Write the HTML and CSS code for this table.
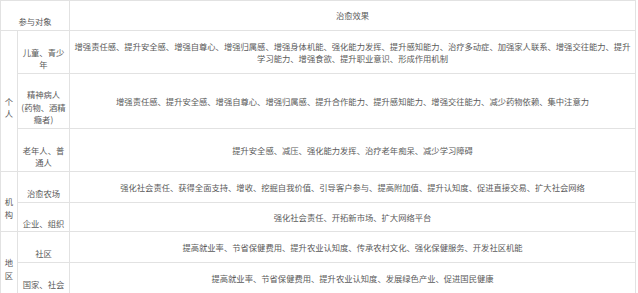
FILE: index.html
```html
<!DOCTYPE html>
<html lang="zh">
<head>
<meta charset="utf-8">
<title>治愈效果</title>
<link rel="stylesheet" href="styles.css">
</head>
<body>
<table class="effects">
  <colgroup>
    <col class="c-cat">
    <col class="c-sub">
    <col class="c-eff">
  </colgroup>
  <tr class="r-head">
    <th class="side" colspan="2">参与对象</th>
    <th class="eff">治愈效果</th>
  </tr>
  <tr class="r-43">
    <td class="side cat" rowspan="3">个人</td>
    <td class="side sub">儿童、青少年</td>
    <td class="eff">增强责任感、提升安全感、增强自尊心、增强归属感、增强身体机能、强化能力发挥、提升感知能力、治疗多动症、加强家人联系、增强交往能力、提升学习能力、增强食欲、提升职业意识、形成作用机制</td>
  </tr>
  <tr class="r-55">
    <td class="side sub">精神病人<br>(药物、酒精瘾者)</td>
    <td class="eff">增强责任感、提升安全感、增强自尊心、增强归属感、提升合作能力、提升感知能力、增强交往能力、减少药物依赖、集中注意力</td>
  </tr>
  <tr class="r-43">
    <td class="side sub">老年人、普通人</td>
    <td class="eff">提升安全感、减压、强化能力发挥、治疗老年痴呆、减少学习障碍</td>
  </tr>
  <tr class="r-31">
    <td class="side cat" rowspan="2">机构</td>
    <td class="side sub">治愈农场</td>
    <td class="eff">强化社会责任、获得全面支持、增收、挖掘自我价值、引导客户参与、提高附加值、提升认知度、促进直接交易、扩大社会网络</td>
  </tr>
  <tr class="r-29">
    <td class="side sub">企业、组织</td>
    <td class="eff">强化社会责任、开拓新市场、扩大网络平台</td>
  </tr>
  <tr class="r-31">
    <td class="side cat" rowspan="2">地区</td>
    <td class="side sub">社区</td>
    <td class="eff">提高就业率、节省保健费用、提升农业认知度、传承农村文化、强化保健服务、开发社区机能</td>
  </tr>
  <tr class="r-31">
    <td class="side sub">国家、社会</td>
    <td class="eff">提高就业率、节省保健费用、提升农业认知度、发展绿色产业、促进国民健康</td>
  </tr>
</table>
</body>
</html>
```
FILE: styles.css
```css
html, body {
  margin: 0;
  padding: 0;
  background: #ffffff;
  overflow: hidden;
}

.effects {
  border-collapse: collapse;
  table-layout: fixed;
  width: 635px;
  font-family: "Noto Sans CJK SC", "Noto Sans", sans-serif;
  font-size: 8.3px;
  line-height: 12.5px;
  color: #5a5a5a;
}

.c-cat { width: 17px; }
.c-sub { width: 52px; }
.c-eff { width: 566px; }

.effects th,
.effects td {
  border: 1px solid #e2e2e2;
  font-weight: normal;
  text-align: center;
  vertical-align: middle;
  padding: 0 4px;
}

.effects .side {
  padding: 12px 3px 0;
}

.effects .cat {
  padding: 12px 2px 0;
}

.r-head { height: 30px; }
.r-43 { height: 43px; }
.r-55 { height: 55px; }
.r-31 { height: 31px; }
.r-29 { height: 29px; }
```
